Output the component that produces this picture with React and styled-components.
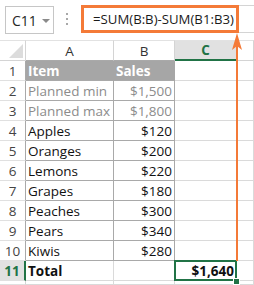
import React from 'react';
import styled, { createGlobalStyle, css } from 'styled-components';

const GREEN = '#217346';
const ORANGE = '#f47a38';
const GRID = '#dadada';
const TABLE = '#a9a9a9';

const Global = createGlobalStyle`
  html, body { margin: 0; padding: 0; background: #fff; }
  body { font-family: "Open Sans", "Liberation Sans", sans-serif; }
`;

const Page = styled.div`
  position: relative;
  width: 254px;
  height: 285px;
  overflow: hidden;
  background: #fff;
`;

const TopBar = styled.div`
  display: flex;
  align-items: flex-start;
  height: 40px;
  box-sizing: border-box;
  padding-top: 5px;
`;

const NameBox = styled.div`
  margin-left: 5px;
  margin-top: 1px;
  width: 49px;
  height: 28px;
  box-sizing: border-box;
  border: 1px solid #c6c6c6;
  display: flex;
  align-items: center;
  padding-left: 6px;
  gap: 5px;
  font-size: 14px;
  color: #262626;
`;

const Caret = styled.span`
  width: 0;
  height: 0;
  border-left: 4px solid transparent;
  border-right: 4px solid transparent;
  border-top: 4px solid #8a8a8a;
  margin-top: 1px;
`;

const Dots = styled.svg`
  margin-left: 12px;
  margin-top: 8px;
  flex: none;
`;

const FormulaBar = styled.div`
  margin-left: 13px;
  flex: 1;
  display: flex;
  height: 28px;
`;

const Highlight = styled.div`
  width: 158px;
  height: 28px;
  box-sizing: border-box;
  border: 3px solid ${ORANGE};
  display: flex;
  align-items: center;
  padding-left: 9px;
  font-size: 13.2px;
  color: #1a1a1a;
  white-space: nowrap;
`;

const FormulaRest = styled.div`
  flex: 1;
  height: 28px;
  box-sizing: border-box;
  border-top: 1px solid #d4d4d4;
  border-bottom: 1px solid #d4d4d4;
`;

const Sheet = styled.div`
  display: grid;
  grid-template-columns: 26px 88px 61px 62px 1fr;
  grid-template-rows: 21px repeat(11, 20px) 1fr;
  height: 245px;
  font-size: 13.5px;
`;

const Corner = styled.div`
  position: relative;
  box-sizing: border-box;
  border-right: 1px solid #d4d4d4;
  border-bottom: 1px solid #d4d4d4;
  border-top: 1px solid #e2e2e2;
`;

const CornerTri = styled.svg`
  position: absolute;
  left: 0;
  top: 0;
`;

const ColHead = styled.div`
  box-sizing: border-box;
  border-top: 1px solid #e2e2e2;
  border-right: 1px solid #d4d4d4;
  border-bottom: 1px solid ${TABLE};
  display: flex;
  align-items: center;
  justify-content: center;
  color: #333;
  ${(p) => p.$plain && css`border-bottom-color: #d4d4d4;`}
  ${(p) =>
    p.$active &&
    css`
      background: #e1e1e1;
      color: ${GREEN};
      font-weight: 700;
      border-bottom: 2px solid ${GREEN};
    `}
`;

const RowHead = styled.div`
  box-sizing: border-box;
  border-right: 1px solid ${TABLE};
  border-bottom: 1px solid #e0e0e0;
  display: flex;
  align-items: center;
  justify-content: center;
  color: #444;
  ${(p) => p.$plain && css`border-right-color: #d4d4d4;`}
  ${(p) =>
    p.$active &&
    css`
      background: #e1e1e1;
      color: ${GREEN};
      font-weight: 700;
      border-right: 2px solid ${GREEN};
    `}
`;

const kinds = {
  head: css`
    background: #a6a6a6;
    color: #fff;
    font-weight: 700;
    border-right-color: #a6a6a6;
    border-bottom-color: ${TABLE};
  `,
  muted: css`
    color: #8c8c8c;
    border-right-color: ${TABLE};
    border-bottom-color: ${TABLE};
  `,
  data: css`
    color: #111;
    border-right-color: ${TABLE};
    border-bottom-color: ${TABLE};
  `,
  total: css`
    color: #111;
    font-weight: 700;
  `,
  plain: css``,
};

const Cell = styled.div`
  position: relative;
  box-sizing: border-box;
  border-right: 1px solid ${GRID};
  border-bottom: 1px solid ${GRID};
  display: flex;
  align-items: center;
  justify-content: ${(p) => (p.$right ? 'flex-end' : 'flex-start')};
  padding: 0 2px 0 2px;
  white-space: nowrap;
  overflow: visible;
  ${(p) => kinds[p.$kind || 'plain']}
  ${(p) =>
    p.$selected &&
    css`
      &::after {
        content: '';
        position: absolute;
        left: -1px;
        right: -1px;
        top: -1px;
        bottom: -1px;
        border: 2px solid ${GREEN};
      }
      &::before {
        content: '';
        position: absolute;
        right: -3px;
        bottom: -4px;
        width: 5px;
        height: 5px;
        background: ${GREEN};
        box-shadow: 0 0 0 1px #fff;
        z-index: 1;
      }
    `}
`;

const Arrow = styled.svg`
  position: absolute;
  left: 231px;
  top: 32px;
  z-index: 2;
`;

const rows = [
  ['Item', 'Sales', 'head'],
  ['Planned min', '$1,500', 'muted'],
  ['Planned max', '$1,800', 'muted'],
  ['Apples', '$120', 'data'],
  ['Oranges', '$200', 'data'],
  ['Lemons', '$220', 'data'],
  ['Grapes', '$180', 'data'],
  ['Peaches', '$300', 'data'],
  ['Pears', '$340', 'data'],
  ['Kiwis', '$280', 'data'],
];

export default function App() {
  return (
    <Page>
      <Global />
      <TopBar>
        <NameBox>
          C11
          <Caret />
        </NameBox>
        <Dots width="2" height="12" viewBox="0 0 2 12">
          <rect x="0" y="0" width="2" height="2" fill="#a8a8a8" />
          <rect x="0" y="5" width="2" height="2" fill="#a8a8a8" />
          <rect x="0" y="10" width="2" height="2" fill="#a8a8a8" />
        </Dots>
        <FormulaBar>
          <Highlight>=SUM(B:B)-SUM(B1:B3)</Highlight>
          <FormulaRest />
        </FormulaBar>
      </TopBar>
      <Sheet>
        <Corner>
          <CornerTri width="25" height="20" viewBox="0 0 25 20">
            <polygon points="23,3 23,17 9,17" fill="#dcdcdc" />
          </CornerTri>
        </Corner>
        <ColHead>A</ColHead>
        <ColHead>B</ColHead>
        <ColHead $active>C</ColHead>
        <ColHead $plain />
        {rows.map(([a, b, kind], i) => (
          <React.Fragment key={i}>
            <RowHead>{i + 1}</RowHead>
            <Cell $kind={kind}>{a}</Cell>
            <Cell $kind={kind} $right={kind !== 'head'}>
              {b}
            </Cell>
            <Cell />
            <Cell />
          </React.Fragment>
        ))}
        <RowHead $active>11</RowHead>
        <Cell $kind="total">Total</Cell>
        <Cell />
        <Cell $kind="total" $right $selected>
          $1,640
        </Cell>
        <Cell />
        <RowHead $plain />
        <Cell />
        <Cell />
        <Cell />
        <Cell />
      </Sheet>
      <Arrow width="12" height="229" viewBox="0 0 12 229">
        <rect x="5" y="10" width="2" height="219" fill={ORANGE} />
        <polygon points="6,1 11,18 6,14 1,18" fill={ORANGE} />
      </Arrow>
    </Page>
  );
}
